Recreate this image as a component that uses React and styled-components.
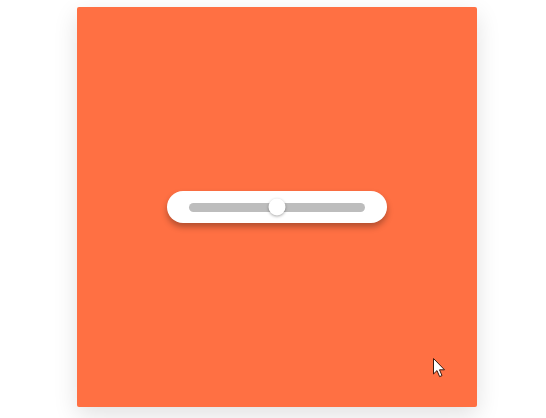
import React from 'react';
import styled, { createGlobalStyle } from 'styled-components';

const GlobalStyle = createGlobalStyle`
  html, body {
    margin: 0;
    background: #ffffff;
    font-family: 'Liberation Sans', Arial, sans-serif;
  }
`;

const Page = styled.div`
  width: 546px;
  height: 418px;
  padding: 7px 0 0 77px;
  box-sizing: border-box;
`;

const Card = styled.div`
  position: relative;
  width: 400px;
  height: 400px;
  background: #ff7043;
  border-radius: 2px;
  box-shadow: 0 8px 24px rgba(0, 0, 0, 0.12);
  display: flex;
  align-items: center;
  justify-content: center;
`;

const Pill = styled.div`
  width: 220px;
  height: 32px;
  box-sizing: border-box;
  padding: 0 22px;
  background: #ffffff;
  border-radius: 16px;
  box-shadow: 0 4px 6px rgba(0, 0, 0, 0.3);
  display: flex;
  align-items: center;
`;

const Track = styled.div`
  position: relative;
  flex: 1;
  height: 9px;
  border-radius: 5px;
  background: #bdbdbd;
`;

const Thumb = styled.div`
  position: absolute;
  top: 50%;
  width: 17px;
  height: 17px;
  border-radius: 50%;
  background: #ffffff;
  box-shadow: 0 1px 3px rgba(0, 0, 0, 0.35);
  transform: translate(-50%, -50%);
`;

const Cursor = styled.svg`
  position: absolute;
  left: 356px;
  top: 351px;
`;

function App() {
  const value = 50;
  return (
    <>
      <GlobalStyle />
      <Page>
        <Card>
          <Pill>
            <Track>
              <Thumb style={{ left: `${value}%` }} />
            </Track>
          </Pill>
          <Cursor width="13" height="20" viewBox="0 0 13 20">
            <path
              d="M0.5 0.5 L0.5 16 L4 12.6 L6.6 18.6 L9 17.6 L6.5 11.8 L11.5 11.8 Z"
              fill="#ffffff"
              stroke="#3a1a10"
              strokeWidth="1"
              strokeLinejoin="round"
            />
          </Cursor>
        </Card>
      </Page>
    </>
  );
}

export default App;
